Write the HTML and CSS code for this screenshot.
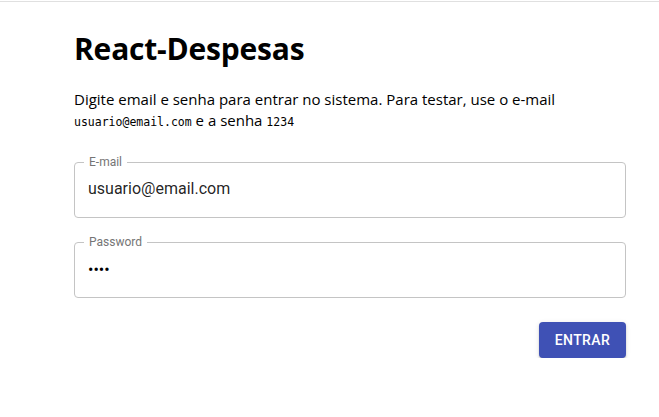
FILE: index.html
```html
<!DOCTYPE html>
<html lang="pt">
<head>
<meta charset="utf-8">
<link rel="stylesheet" href="styles.css">
</head>
<body>
<div class="topline"></div>
<main class="page">
  <h1 class="title">React-Despesas</h1>
  <p class="intro">Digite email e senha para entrar no sistema. Para testar, use o e-mail <code>usuario@email.com</code> e a senha <code>1234</code></p>
  <form class="form">
    <div class="field">
      <span class="label">E-mail</span>
      <div class="input">usuario@email.com</div>
    </div>
    <div class="field">
      <span class="label">Password</span>
      <div class="input dots">••••</div>
    </div>
    <div class="actions">
      <button type="button" class="btn">ENTRAR</button>
    </div>
  </form>
</main>
</body>
</html>
```
FILE: styles.css
```css
html, body { margin: 0; padding: 0; background: #fff; }
body { font-family: "Open Sans", "Noto Sans", sans-serif; color: #000; }
.topline { height: 1px; margin-top: 1px; background: #e0e0e0; }
.page { padding: 0 33px 0 74px; }
.title { margin: 27px 0 0; font-size: 30px; font-weight: 700; line-height: 40px; letter-spacing: -0.2px; }
.intro { margin: 20px 0 0; font-size: 15px; line-height: 21px; }
.intro code { font-family: "DejaVu Sans Mono", monospace; font-size: 11.5px; }
.form { margin-top: 29px; display: flex; flex-direction: column; }
.field { position: relative; border: 1px solid #c4c4c4; border-radius: 4px; height: 54px; margin-bottom: 24px; }
.label { position: absolute; top: -8px; left: 9px; padding: 0 5px; background: #fff; font-family: Roboto, sans-serif; font-size: 12px; line-height: 14px; color: #757575; }
.input { font-family: Roboto, sans-serif; font-size: 16px; color: rgba(0,0,0,0.87); padding: 16px 13px; line-height: 19px; }
.dots { font-size: 16px; letter-spacing: 0; padding-top: 17px; color: #000; }
.actions { display: flex; justify-content: flex-end; }
.btn { background: #3f51b5; color: #fff; border: 0; border-radius: 4px; height: 36px; width: 87px; font-family: Roboto, sans-serif; font-weight: 500; font-size: 14px; letter-spacing: 0.4px; box-shadow: 0 3px 1px -2px rgba(0,0,0,0.2), 0 2px 2px 0 rgba(0,0,0,0.14), 0 1px 5px 0 rgba(0,0,0,0.12); }
```
